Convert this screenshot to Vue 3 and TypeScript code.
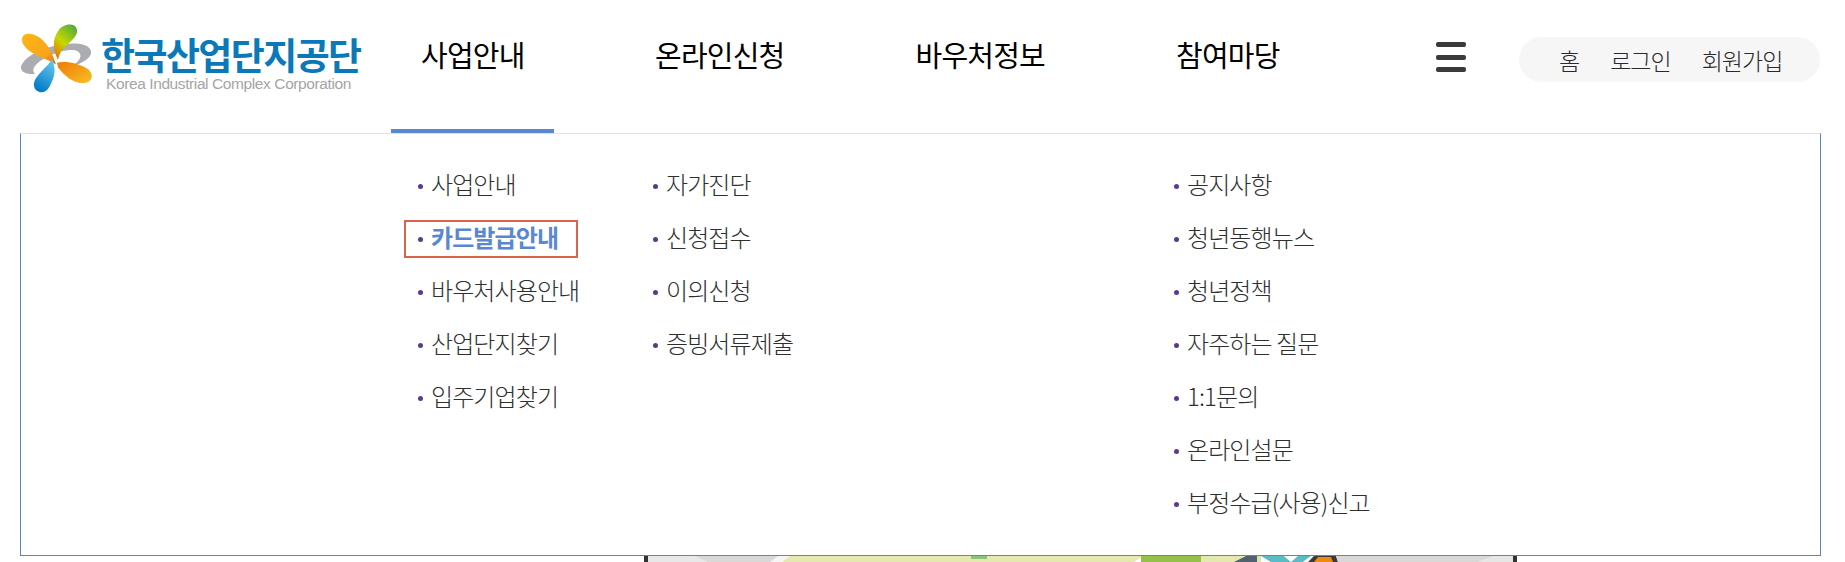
<script setup lang="ts">
const tabs = ['사업안내', '온라인신청', '바우처정보', '참여마당']
const columns = [
  { width: 235, items: ['사업안내', '카드발급안내', '바우처사용안내', '산업단지찾기', '입주기업찾기'] },
  { width: 521, items: ['자가진단', '신청접수', '이의신청', '증빙서류제출'] },
  { width: 300, items: ['공지사항', '청년동행뉴스', '청년정책', '자주하는 질문', '1:1문의', '온라인설문', '부정수급(사용)신고'] },
]
const petals = [
  { d: 'M47 2 C56 0 60 8 55 15 C49 23 40 28 38 40 C33 30 32 18 38 9 C40 5 43 3 47 2 Z', fill: 'url(#pg)' },
  { d: 'M3 14 C8 9 18 13 24 20 C30 27 33 35 36 45 C26 38 13 35 6 27 C2 22 1 18 3 14 Z', fill: 'url(#po)' },
  { d: 'M37 43 C47 41 59 44 68 50 C74 55 73 64 64 65 C54 66 45 58 38 48 Z', fill: 'url(#po2)' },
  { d: 'M32 39 C37 51 34 60 29 70 C25 78 15 76 14 68 C13 58 26 50 32 39 Z', fill: 'url(#pb)' },
]
const photoShapes = [
  { points: '0,0 46,0 60,6 0,6', fill: '#e8e8e8' },
  { points: '46,0 138,0 122,6 60,6', fill: '#d9d8d6' },
  { points: '130,0 142,0 134,6 122,6', fill: '#f6f6f4' },
  { points: '142,0 495,0 486,6 134,6', fill: '#e5e9b0' },
  { points: '323,0 339,0 339,3 323,3', fill: '#8dc27a' },
  { points: '493,0 553,0 553,6 493,6', fill: '#95c04a' },
  { points: '553,0 598,0 586,6 553,6', fill: '#e5e9b0' },
  { points: '598,0 609,0 609,6 586,6', fill: '#4f6270' },
  { points: '609,0 613,0 613,6 609,6', fill: '#dfe3b0' },
  { points: '613,0 636,0 643,6 623,6', fill: '#5bbcc6' },
  { points: '636,0 650,0 643,6', fill: '#ffffff' },
  { points: '650,0 663,0 655,6 643,6', fill: '#5bbcc6' },
  { points: '663,0 688,0 688,6 655,6', fill: '#ffffff' },
  { points: '666,0 688,0 690,6 660,6', fill: '#3a3a3a' },
  { points: '670,1 683,1 685,6 666,6', fill: '#ee8a10' },
  { points: '688,0 846,0 830,6 690,6', fill: '#d9d8d6' },
  { points: '846,0 868,0 868,6 830,6', fill: '#e6e6e4' },
]
</script>

<template>
  <div class="page">
    <header class="header">
      <a class="logo">
        <svg class="mark" viewBox="0 0 76 78" preserveAspectRatio="none" aria-hidden="true">
          <defs>
            <linearGradient id="pg" x1="0.8" y1="0" x2="0.2" y2="1"><stop offset="0" stop-color="#54ab3c" /><stop offset="0.55" stop-color="#c5d800" /><stop offset="1" stop-color="#ec6f00" /></linearGradient>
            <linearGradient id="po" x1="0" y1="0" x2="1" y2="1"><stop offset="0" stop-color="#fbb715" /><stop offset="0.7" stop-color="#f9a51a" /><stop offset="1" stop-color="#d96a10" /></linearGradient>
            <linearGradient id="po2" x1="0" y1="0" x2="1" y2="1"><stop offset="0" stop-color="#ed7a05" /><stop offset="1" stop-color="#fbbf24" /></linearGradient>
            <linearGradient id="pb" x1="0.7" y1="0" x2="0.3" y2="1"><stop offset="0" stop-color="#62c6ee" /><stop offset="1" stop-color="#0078c4" /></linearGradient>
          </defs>
          <path d="M1 47 C5 36 22 26 44 23 C58 21 70 23 71 31 C72 38 62 44 52 47 C60 41 63 35 58 31 C50 26 30 33 18 43 C13 48 12 52 15 55 C7 56 0 53 1 47 Z" fill="#abacb1" />
          <path v-for="(petal, i) in petals" :key="i" :d="petal.d" :fill="petal.fill" />
        </svg>
        <span class="logo-text">
          <strong>한국산업단지공단</strong>
          <small>Korea Industrial Complex Corporation</small>
        </span>
      </a>

      <nav class="tabs">
        <a v-for="(tab, i) in tabs" :key="tab" class="tab" :class="{ active: i === 0 }">{{ tab }}</a>
      </nav>

      <button class="menu" aria-label="전체메뉴"><i /><i /><i /></button>

      <div class="utility">
        <a>홈</a>
        <a>로그인</a>
        <a>회원가입</a>
      </div>
    </header>

    <section class="panel">
      <ul v-for="(col, c) in columns" :key="c" class="column" :style="{ width: col.width + 'px' }">
        <li v-for="item in col.items" :key="item" class="item" :class="{ current: item === '카드발급안내' }">
          <span>{{ item }}</span>
        </li>
      </ul>
    </section>

    <svg class="photo" viewBox="0 0 865 6" preserveAspectRatio="none" aria-hidden="true">
      <polygon v-for="(shape, i) in photoShapes" :key="i" :points="shape.points" :fill="shape.fill" />
    </svg>
  </div>
</template>

<style>
html, body { margin: 0; background: #fff; overflow: hidden; }
</style>

<style scoped>
.page {
  width: 1845px;
  height: 562px;
  overflow: hidden;
  font-family: "Noto Sans CJK KR", "Noto Sans", sans-serif;
  color: #333;
}
.header {
  height: 133px;
  display: flex;
  align-items: flex-start;
  box-sizing: border-box;
}
.logo {
  width: 391px;
  height: 100px;
  padding: 23px 0 0 20px;
  box-sizing: border-box;
  display: flex;
  gap: 5px;
}
.mark { width: 76px; height: 72px; flex: none; }
.logo-text { display: flex; flex-direction: column; }
.logo-text strong {
  font-size: 37px;
  line-height: 40px;
  font-weight: 700;
  color: #0b79b8;
  letter-spacing: -1.6px;
  margin-top: 11px;
  white-space: nowrap;
}
.logo-text small {
  font-family: "Liberation Sans", sans-serif;
  font-size: 15.5px;
  line-height: 16px;
  color: #a5a5a5;
  letter-spacing: -0.4px;
  margin-left: 5px;
  margin-top: 2px;
  white-space: nowrap;
}
.tabs { display: flex; width: 1045px; }
.tab {
  width: 260.5px;
  height: 133px;
  padding: 34px 0 0 30px;
  box-sizing: border-box;
  font-size: 29px;
  line-height: 40px;
  font-weight: 400;
  letter-spacing: -0.8px;
  color: #000;
  white-space: nowrap;
}
.tab.active {
  width: 163px;
  margin-right: 71px;
  border-bottom: 4px solid #5a87d2;
}
.menu {
  width: 30px;
  height: 30px;
  margin: 42px 0 0 0;
  padding: 0;
  border: 0;
  background: none;
  display: flex;
  flex-direction: column;
  justify-content: space-between;
}
.menu i { display: block; height: 5px; border-radius: 2px; background: #3a3a3a; }
.utility {
  margin: 37px 0 0 53px;
  width: 301px;
  height: 45px;
  box-sizing: border-box;
  border-radius: 23px;
  background: #f6f6f6;
  display: flex;
  align-items: center;
  padding-left: 40px;
  gap: 31px;
  font-size: 23px;
  font-weight: 300;
  letter-spacing: -1px;
  color: #2a2a2a;
  white-space: nowrap;
}
.panel {
  width: 1801px;
  height: 423px;
  margin-left: 20px;
  box-sizing: border-box;
  background: #fff;
  border: 1px solid #5a87c8;
  border-top-color: #e2e2e2;
  padding: 23px 0 0 396px;
  display: flex;
}
.column { list-style: none; margin: 0; padding: 0; }
.item {
  height: 53px;
  display: flex;
  align-items: center;
  font-size: 24px;
  font-weight: 300;
  letter-spacing: -0.9px;
  color: #2f2f2f;
  white-space: nowrap;
  padding-left: 14px;
  position: relative;
}
.item::before {
  content: "";
  position: absolute;
  left: 1px;
  top: 27px;
  width: 5px;
  height: 5px;
  border-radius: 50%;
  background: #5b3a8c;
}
.item.current { color: #5a87d2; font-weight: 700; }
.item.current::after {
  content: "";
  position: absolute;
  left: -13px;
  top: 10px;
  box-sizing: border-box;
  width: 174px;
  height: 38px;
  border: 2px solid #d9644a;
}
.photo {
  display: block;
  margin-left: 644px;
  width: 873px;
  height: 6px;
  box-sizing: border-box;
  border-left: 4px solid #333;
  border-right: 4px solid #333;
}
</style>
